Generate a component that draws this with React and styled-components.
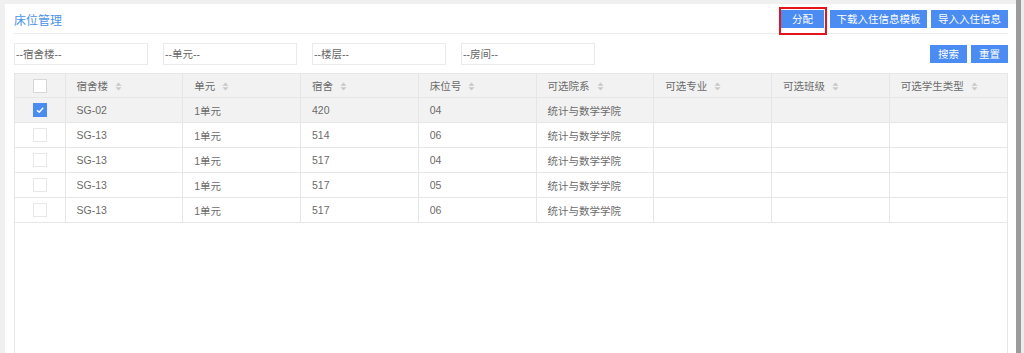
import React from 'react';
import styled, { createGlobalStyle, css } from 'styled-components';

const GlobalStyle = createGlobalStyle`
  html, body {
    margin: 0;
    padding: 0;
    background: #f0f0f0;
    font-family: "Liberation Sans", "Noto Sans CJK SC", sans-serif;
  }
  * { box-sizing: border-box; }
`;

const Page = styled.div`
  display: flex;
  height: 353px;
  overflow: hidden;
`;

const Panel = styled.div`
  flex: 1;
  margin: 4px 0 0 5px;
  background: #fff;
  padding: 0 8px 0 9px;
  display: flex;
  flex-direction: column;
`;

const ScrollTrack = styled.div`
  width: 8px;
  display: flex;
  background: #ececec;
  > div {
    width: 5px;
    background: #9b9b9b;
  }
`;

const TitleBar = styled.div`
  display: flex;
  justify-content: space-between;
  align-items: center;
  height: 30px;
  border-bottom: 1px solid #ededed;
  padding-top: 1px;
`;

const Title = styled.div`
  color: #4a93ea;
  font-size: 12px;
`;

const Actions = styled.div`
  display: flex;
  gap: 4px;
  align-items: center;
`;

const Button = styled.button`
  border: none;
  background: #4a8cf2;
  color: #fff;
  font-family: inherit;
  font-size: 10.5px;
  height: 18px;
  padding: 0 7px;
  line-height: 18px;
  cursor: pointer;
  ${({ $width }) =>
    $width &&
    css`
      width: ${$width}px;
      padding: 0;
    `}
`;

const Highlight = styled.div`
  border: 2px solid #e3141b;
  padding: 0 1px 5px 0;
  margin-right: -1px;
  margin-top: 4px;
  margin-left: -2px;
`;

const FilterBar = styled.div`
  display: flex;
  align-items: center;
  justify-content: space-between;
  height: 39px;
`;

const Inputs = styled.div`
  display: flex;
  gap: 15px;
`;

const Input = styled.input`
  width: 134px;
  height: 22px;
  border: 1px solid #eaeaea;
  padding: 0 1px;
  font-family: inherit;
  font-size: 10.5px;
  color: #666;
  outline: none;
  &::placeholder {
    color: #666;
  }
`;

const TableBox = styled.div`
  flex: 1;
  border-left: 1px solid #e6e6e6;
  border-right: 1px solid #e6e6e6;
`;

const Table = styled.table`
  width: 100%;
  border-collapse: collapse;
  table-layout: fixed;
  font-size: 10.5px;
  color: #6b6b6b;
`;

const Th = styled.th`
  height: 24px;
  background: #f2f2f2;
  font-weight: normal;
  text-align: left;
  padding: 0 11px;
  border: 1px solid #e6e6e6;
  border-left: none;
  white-space: nowrap;
  &:last-child { border-right: none; }
`;

const Tr = styled.tr`
  background: ${({ $selected }) => ($selected ? '#f2f2f2' : '#fff')};
`;

const Td = styled.td`
  height: 25px;
  padding: 0 11px;
  border-right: 1px solid #e6e6e6;
  border-bottom: 1px solid #e6e6e6;
  white-space: nowrap;
  &:last-child { border-right: none; }
`;

const CheckCell = styled.div`
  display: flex;
  justify-content: center;
`;

const Check = styled.span`
  width: 14px;
  height: 14px;
  border: 1px solid ${({ $on, $strong }) => ($on ? '#4a8cf2' : $strong ? '#d8d8d8' : '#e8e8e8')};
  background: ${({ $on }) => ($on ? '#4a8cf2' : '#fff')};
  display: flex;
  align-items: center;
  justify-content: center;
`;

const SortIcon = () => (
  <svg width="7" height="9" viewBox="0 0 7 9" style={{ marginLeft: 7, verticalAlign: -1 }}>
    <path d="M3.5 0.5 L6.5 3.7 H0.5 Z" fill="#c8c8c8" />
    <path d="M3.5 8.5 L6.5 5.3 H0.5 Z" fill="#c8c8c8" />
  </svg>
);

const columns = ['宿舍楼', '单元', '宿舍', '床位号', '可选院系', '可选专业', '可选班级', '可选学生类型'];

const rows = [
  { building: 'SG-02', unit: '1单元', room: '420', bed: '04', dept: '统计与数学学院', selected: true },
  { building: 'SG-13', unit: '1单元', room: '514', bed: '06', dept: '统计与数学学院' },
  { building: 'SG-13', unit: '1单元', room: '517', bed: '04', dept: '统计与数学学院' },
  { building: 'SG-13', unit: '1单元', room: '517', bed: '05', dept: '统计与数学学院' },
  { building: 'SG-13', unit: '1单元', room: '517', bed: '06', dept: '统计与数学学院' },
];

export default function App() {
  return (
    <>
      <GlobalStyle />
      <Page>
        <Panel>
          <TitleBar>
            <Title>床位管理</Title>
            <Actions>
              <Highlight>
                <Button $width={43}>分配</Button>
              </Highlight>
              <Button $width={97}>下载入住信息模板</Button>
              <Button $width={77}>导入入住信息</Button>
            </Actions>
          </TitleBar>
          <FilterBar>
            <Inputs>
              <Input placeholder="--宿舍楼--" />
              <Input placeholder="--单元--" />
              <Input placeholder="--楼层--" />
              <Input placeholder="--房间--" />
            </Inputs>
            <Actions>
              <Button $width={37}>搜索</Button>
              <Button $width={37}>重置</Button>
            </Actions>
          </FilterBar>
          <TableBox>
            <Table>
              <colgroup>
                <col style={{ width: 50 }} />
                {columns.map((c) => (
                  <col key={c} />
                ))}
              </colgroup>
              <thead>
                <tr>
                  <Th>
                    <CheckCell>
                      <Check $strong />
                    </CheckCell>
                  </Th>
                  {columns.map((c) => (
                    <Th key={c}>
                      {c}
                      <SortIcon />
                    </Th>
                  ))}
                </tr>
              </thead>
              <tbody>
                {rows.map((r, i) => (
                  <Tr key={i} $selected={r.selected}>
                    <Td>
                      <CheckCell>
                        <Check $on={r.selected}>
                          {r.selected && (
                            <svg width="10" height="10" viewBox="0 0 10 10">
                              <path d="M2 5.2 L4.2 7.3 L8.2 2.8" stroke="#fff" strokeWidth="1.4" fill="none" />
                            </svg>
                          )}
                        </Check>
                      </CheckCell>
                    </Td>
                    <Td>{r.building}</Td>
                    <Td>{r.unit}</Td>
                    <Td>{r.room}</Td>
                    <Td>{r.bed}</Td>
                    <Td>{r.dept}</Td>
                    <Td />
                    <Td />
                    <Td />
                  </Tr>
                ))}
              </tbody>
            </Table>
          </TableBox>
        </Panel>
        <ScrollTrack>
          <div />
        </ScrollTrack>
      </Page>
    </>
  );
}
